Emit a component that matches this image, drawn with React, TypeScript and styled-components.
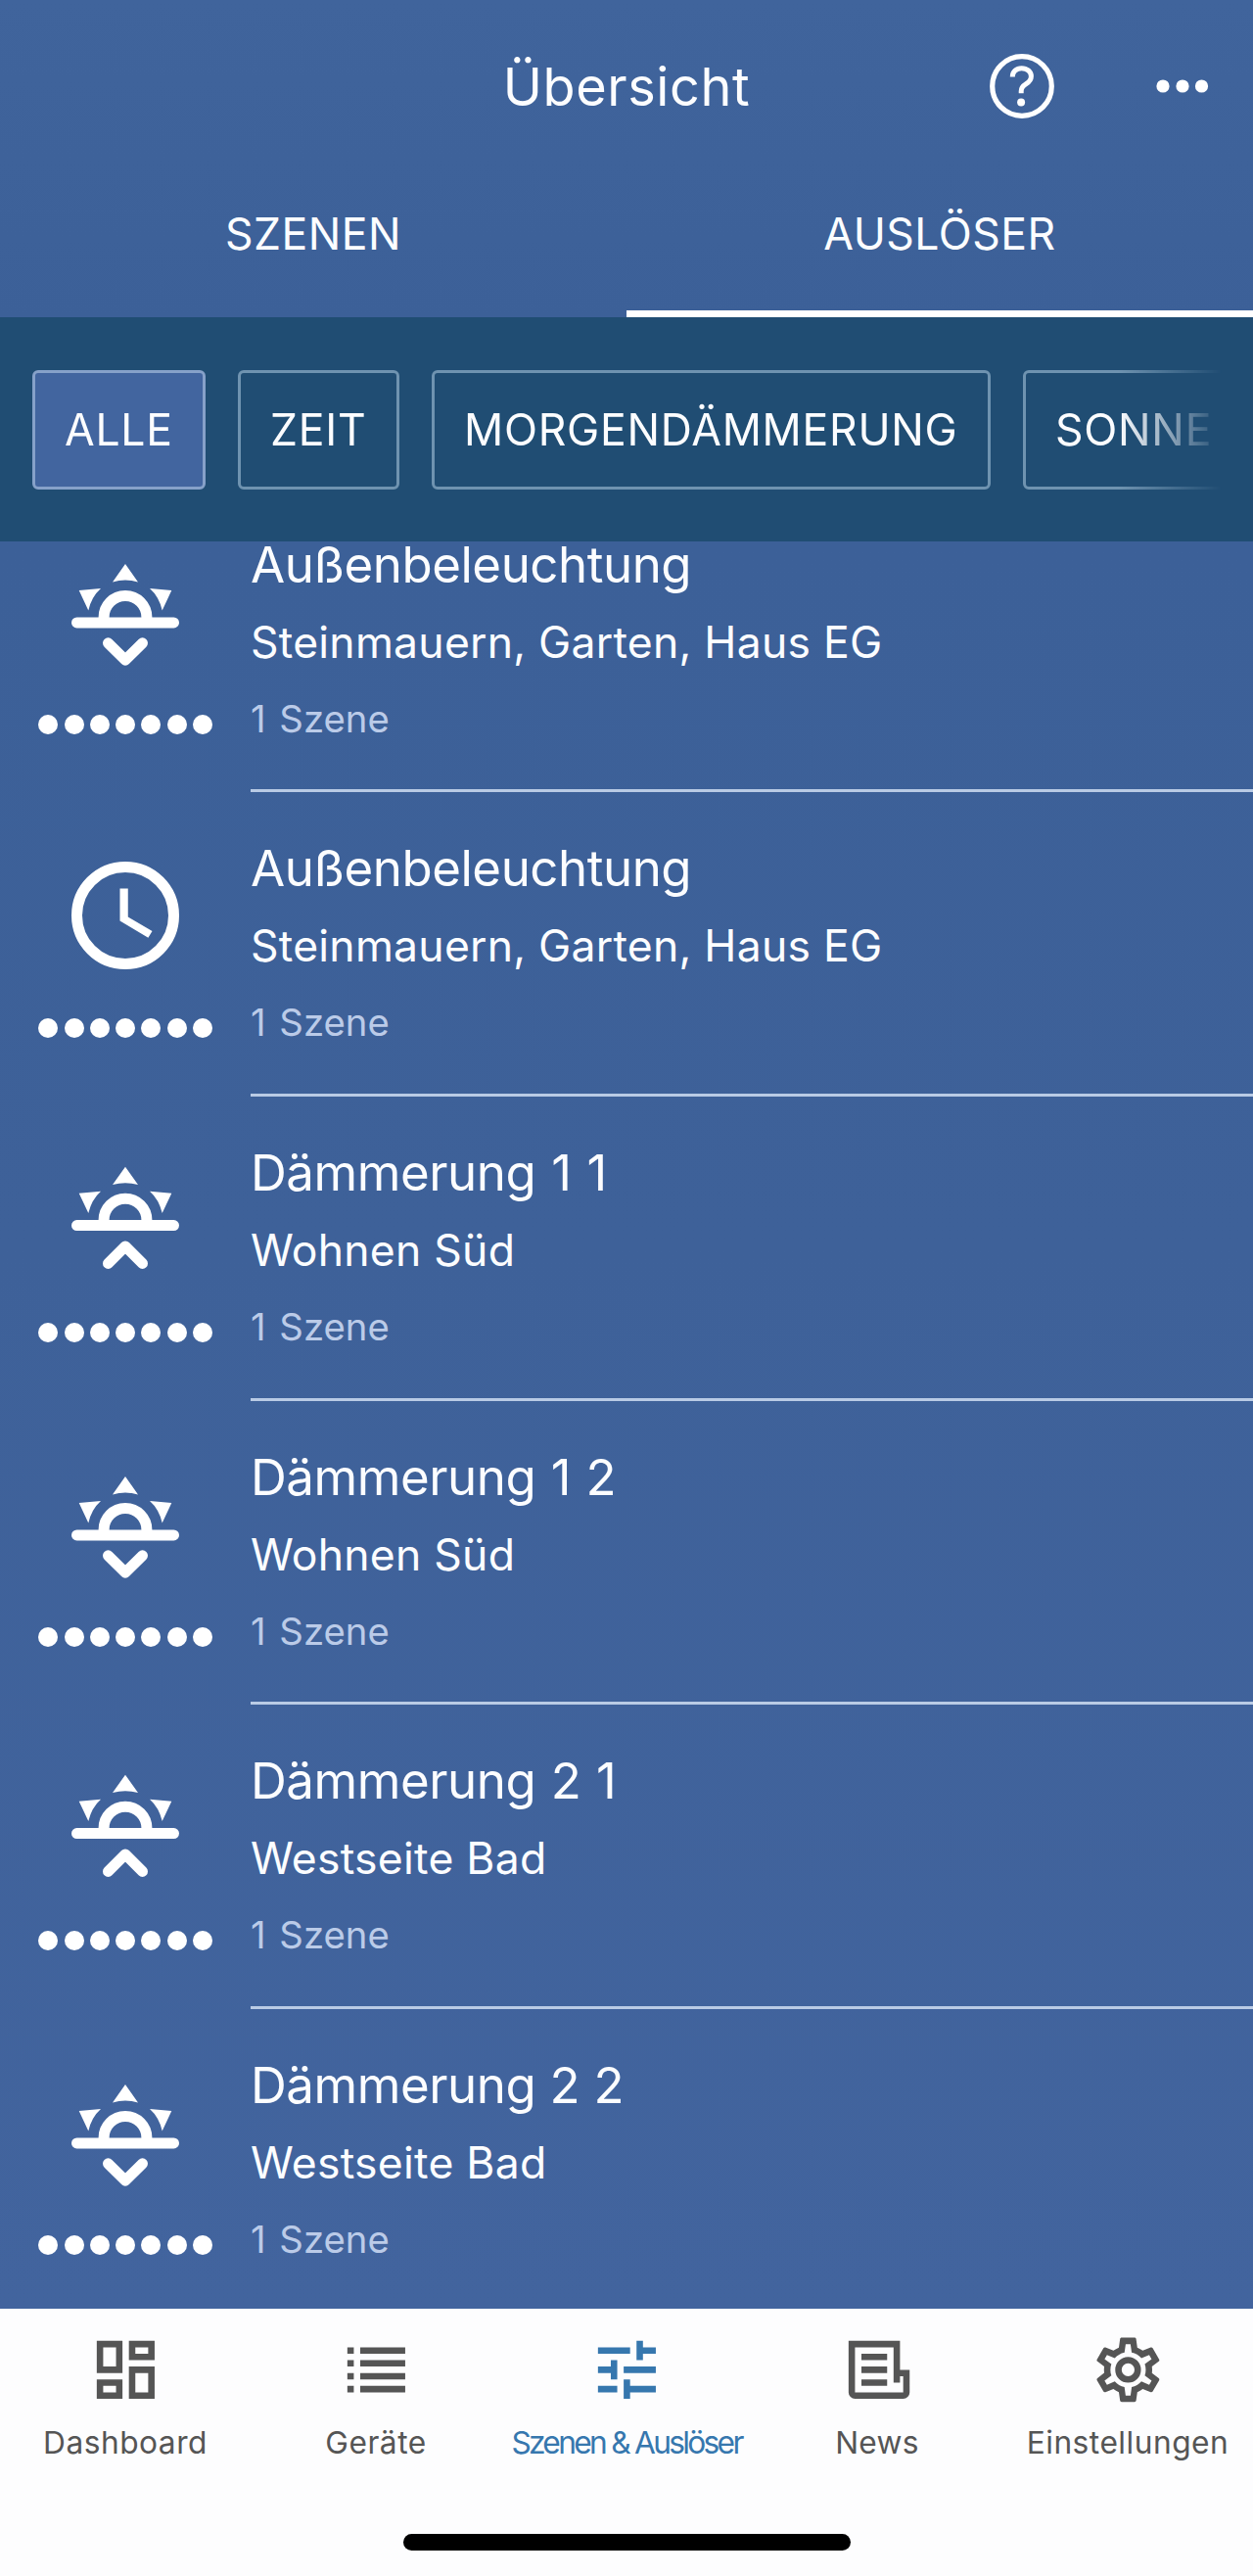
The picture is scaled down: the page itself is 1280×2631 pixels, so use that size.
import React from "react";
import styled, { createGlobalStyle } from "styled-components";

const GlobalStyle = createGlobalStyle`
  * { box-sizing: border-box; }
  body { margin: 0; background: #fdfdfe; }
  svg { display: block; }
`;

const Screen = styled.main`
  width: 1280px;
  height: 2631px;
  display: flex;
  flex-direction: column;
  overflow: hidden;
  background: #3e6199;
  color: #fcfdff;
  font-family: Inter, "Liberation Sans", sans-serif;
`;

const Header = styled.header`
  height: 324px;
  flex: none;
  display: flex;
  flex-direction: column;
  background: linear-gradient(#40649c, #3c6098);
`;

const TitleBar = styled.div`
  height: 175px;
  display: grid;
  grid-template-columns: 1fr 260px 1fr;
  align-items: center;
`;

const Title = styled.h1`
  grid-column: 2;
  margin: 3px 0 0;
  text-align: center;
  white-space: nowrap;
  font-size: 54px;
  line-height: 66px;
  font-weight: 400;
  letter-spacing: 0.6px;
`;

const Actions = styled.div`
  display: flex;
  align-items: center;
  justify-content: flex-end;
  gap: 104px;
  padding-right: 45px;
`;

const Tabs = styled.nav`
  flex: 1;
  display: grid;
  grid-template-columns: 1fr 1fr;
`;

const Tab = styled.div<{ $active?: boolean }>`
  display: flex;
  justify-content: center;
  padding-top: 37px;
  border-bottom: 7px solid ${(p) => (p.$active ? "#fff" : "transparent")};
  font-size: 44.5px;
  line-height: 54px;
  letter-spacing: 0.5px;
`;

const FilterBar = styled.div`
  height: 229px;
  flex: none;
  padding: 54px 32px 0 33px;
  background: #204d73;
`;

const ChipRow = styled.div`
  display: flex;
  gap: 33px;
  overflow: hidden;
  mask-image: linear-gradient(to right, #000 1110px, transparent 1215px);
`;

const Chip = styled.div<{ $width: number; $active?: boolean }>`
  width: ${(p) => p.$width}px;
  height: 122px;
  flex: none;
  display: flex;
  align-items: center;
  padding-left: 30px;
  border: 3.3px solid ${(p) => (p.$active ? "#86a1c9" : "#6f93b0")};
  border-radius: 6px;
  background: ${(p) => (p.$active ? "#42659f" : "transparent")};
  font-size: 44.5px;
  line-height: 54px;
  white-space: nowrap;
  letter-spacing: 0.75px;
`;

const List = styled.section`
  flex: 1;
  min-height: 0;
  overflow: hidden;
  background: linear-gradient(#3c6098, #3e6199 40%, #42649e);
`;

/* The list is scrolled, so its first row starts above the visible area. */
const ScrolledRows = styled.div`
  display: flex;
  flex-direction: column;
  margin-top: -54.2px;
`;

const Row = styled.article`
  height: 310.6px;
  flex: none;
  display: grid;
  grid-template-columns: 256px 1fr;
`;

const IconColumn = styled.div`
  display: flex;
  flex-direction: column;
  align-items: center;
  padding-top: 71px;
`;

const Days = styled.div`
  display: flex;
  gap: 6.25px;
  margin-top: 50px;
`;

const Day = styled.i`
  width: 20px;
  height: 20px;
  border-radius: 50%;
  background: #fff;
`;

const Details = styled.div<{ $divider: boolean }>`
  display: flex;
  flex-direction: column;
  padding-top: 45px;
  border-bottom: 3.3px solid ${(p) => (p.$divider ? "#b9cbe5" : "transparent")};
`;

const Name = styled.div<{ $wordSpacing: number }>`
  font-size: 51px;
  line-height: 66px;
  letter-spacing: -0.45px;
  word-spacing: ${(p) => p.$wordSpacing}px;
`;

const Place = styled.div`
  margin-top: 17px;
  font-size: 44.5px;
  line-height: 58px;
  letter-spacing: 0.24px;
`;

const Count = styled.div`
  margin-top: 24px;
  font-size: 38.3px;
  line-height: 50px;
  word-spacing: 3px;
  color: #bbcbe8;
`;

const Footer = styled.footer`
  height: 273px;
  flex: none;
  display: flex;
  flex-direction: column;
  align-items: center;
  background: #fdfdfe;
`;

const NavItems = styled.nav`
  width: 100%;
  height: 230px;
  display: grid;
  grid-template-columns: repeat(5, 1fr);
`;

const NavItem = styled.div<{ $active?: boolean; $spacing: number }>`
  display: flex;
  flex-direction: column;
  align-items: center;
  gap: 15px;
  padding-top: 23px;
  color: ${(p) => (p.$active ? "#3677ae" : "#555")};
  font-size: 31.7px;
  line-height: 40px;
  white-space: nowrap;
  letter-spacing: ${(p) => p.$spacing}px;
`;

const HomeIndicator = styled.div`
  width: 457px;
  height: 17px;
  border-radius: 9px;
  background: #000;
`;

type TriggerKind = "sunset" | "sunrise" | "clock";

function TriggerIcon({ kind }: { kind: TriggerKind }) {
  if (kind === "clock") {
    return (
      <svg width="110" height="110" viewBox="2 2 20 20" fill="#fff">
        <circle cx="12" cy="12" r="9" fill="none" stroke="#fff" strokeWidth="2" />
        <path d="M12.5 7H11v6l5.25 3.15.75-1.23-4.5-2.67z" />
      </svg>
    );
  }
  const rising = kind === "sunrise";
  return (
    <svg width="110" height="110" viewBox={rising ? "0 5.3 110 110" : "0 0 110 110"} fill="#fff">
      <path d="M55 6.1 68 24.4Q55 20.6 42 24.4Z" />
      <path d="M7.7 33.1 30 31.1Q20.6 39.5 17.3 53.4Z" />
      <path d="M102.3 33.1 80 31.1Q89.4 39.5 92.7 53.4Z" />
      <path d="M33.1 62V60.4a21.9 21.9 0 0 1 43.8 0V62" fill="none" stroke="#fff" strokeWidth="11" />
      <rect y="60.4" width="110" height="11" rx="5.5" />
      <path
        d={rising ? "M37.5 104.7 55 87.2l17.5 17.5" : "M37.5 86.8 55 104.2l17.5-17.4"}
        fill="none"
        stroke="#fff"
        strokeWidth="11"
        strokeLinecap="round"
        strokeLinejoin="round"
      />
    </svg>
  );
}

function HelpIcon() {
  return (
    <svg width="66" height="66" viewBox="0 0 66 66" fill="none" stroke="#fff">
      <circle cx="33" cy="33" r="30.3" strokeWidth="5.2" />
      <path
        d="M23.3 23.4c0-5 3.9-8.7 9.3-8.7 5.6 0 9.8 3.4 9.8 8.4 0 3.5-1.9 5.6-5.1 7.6-3.7 2.3-5.1 4.1-5.1 7.3v2.3"
        strokeWidth="5"
      />
      <circle cx="32.1" cy="49.5" r="4" fill="#fff" stroke="none" />
    </svg>
  );
}

function MoreIcon() {
  return (
    <svg width="54" height="14" viewBox="0 0 54 14" fill="#fff">
      <circle cx="7" cy="7" r="6.6" />
      <circle cx="27" cy="7" r="6.6" />
      <circle cx="46.5" cy="7" r="6.6" />
    </svg>
  );
}

const navPaths = {
  dashboard:
    "M19 5v2h-4V5h4M9 5v6H5V5h4m10 8v6h-4v-6h4M9 17v2H5v-2h4M21 3h-8v6h8V3zM11 3H3v10h8V3zm10 8h-8v10h8V11zm-10 4H3v6h8v-6z",
  list: "M3 5h2v2H3zM7 5h14v2H7zM3 9h2v2H3zM7 9h14v2H7zM3 13h2v2H3zM7 13h14v2H7zM3 17h2v2H3zM7 17h14v2H7z",
  tune: "M3 17v2h6v-2H3zM3 5v2h10V5H3zm10 16v-2h8v-2h-8v-2h-2v6h2zM7 9v2H3v2h4v2h2V9H7zm14 4v-2H11v2h10zm-6-4h2V7h4V5h-4V3h-2v6z",
  news: "M3 3h16v9h3v7a2 2 0 0 1-2 2H5a2 2 0 0 1-2-2zM5 5v14h15v-5h-1v2h-2V5zM7 7h8v2H7zM7 11h8v2H7zM7 15h8v2H7z",
  settings:
    "M12,8A4,4 0 0,1 16,12A4,4 0 0,1 12,16A4,4 0 0,1 8,12A4,4 0 0,1 12,8M12,10A2,2 0 0,0 10,12A2,2 0 0,0 12,14A2,2 0 0,0 14,12A2,2 0 0,0 12,10M10,22C9.75,22 9.54,21.82 9.5,21.58L9.13,18.93C8.5,18.68 7.96,18.34 7.44,17.94L4.95,18.95C4.73,19.03 4.46,18.95 4.34,18.73L2.34,15.27C2.21,15.05 2.27,14.78 2.46,14.63L4.57,12.97L4.5,12L4.57,11L2.46,9.37C2.27,9.22 2.21,8.95 2.34,8.73L4.34,5.27C4.46,5.05 4.73,4.96 4.95,5.05L7.44,6.05C7.96,5.66 8.5,5.32 9.13,5.07L9.5,2.42C9.54,2.18 9.75,2 10,2H14C14.25,2 14.46,2.18 14.5,2.42L14.87,5.07C15.5,5.32 16.04,5.66 16.56,6.05L19.05,5.05C19.27,4.96 19.54,5.05 19.66,5.27L21.66,8.73C21.79,8.95 21.73,9.22 21.54,9.37L19.43,11L19.5,12L19.43,13L21.54,14.63C21.73,14.78 21.79,15.05 21.66,15.27L19.66,18.73C19.54,18.95 19.27,19.04 19.05,18.95L16.56,17.95C16.04,18.34 15.5,18.68 14.87,18.93L14.5,21.58C14.46,21.82 14.25,22 14,22H10M11.25,4L10.88,6.61C9.68,6.86 8.62,7.5 7.85,8.39L5.44,7.35L4.69,8.65L6.8,10.2C6.4,11.37 6.4,12.64 6.8,13.8L4.68,15.36L5.43,16.66L7.86,15.62C8.63,16.5 9.68,17.14 10.87,17.38L11.24,20H12.76L13.13,17.39C14.32,17.14 15.37,16.5 16.14,15.62L18.57,16.66L19.32,15.36L17.2,13.81C17.6,12.64 17.6,11.37 17.2,10.2L19.31,8.65L18.56,7.35L16.15,8.39C15.38,7.5 14.32,6.86 13.12,6.62L12.75,4H11.25Z",
};

const chips = [
  { label: "ALLE", width: 177, active: true },
  { label: "ZEIT", width: 165 },
  { label: "MORGENDÄMMERUNG", width: 571 },
  { label: "SONNE", width: 300 },
];

const triggers: { kind: TriggerKind; name: string; place: string; wordSpacing: number }[] = [
  { kind: "sunset", name: "Außenbeleuchtung", place: "Steinmauern, Garten, Haus EG", wordSpacing: 0 },
  { kind: "clock", name: "Außenbeleuchtung", place: "Steinmauern, Garten, Haus EG", wordSpacing: 0 },
  { kind: "sunrise", name: "Dämmerung 1 1", place: "Wohnen Süd", wordSpacing: 2.1 },
  { kind: "sunset", name: "Dämmerung 1 2", place: "Wohnen Süd", wordSpacing: 1.6 },
  { kind: "sunrise", name: "Dämmerung 2 1", place: "Westseite Bad", wordSpacing: 1.6 },
  { kind: "sunset", name: "Dämmerung 2 2", place: "Westseite Bad", wordSpacing: 0.4 },
];

const navItems: { label: string; icon: keyof typeof navPaths; spacing: number; active?: boolean }[] = [
  { label: "Dashboard", icon: "dashboard", spacing: 0.5 },
  { label: "Geräte", icon: "list", spacing: 0.5 },
  { label: "Szenen & Auslöser", icon: "tune", spacing: -2.7, active: true },
  { label: "News", icon: "news", spacing: 0.3 },
  { label: "Einstellungen", icon: "settings", spacing: 0.5 },
];

export default function App() {
  return (
    <Screen>
      <GlobalStyle />
      <Header>
        <TitleBar>
          <Title>Übersicht</Title>
          <Actions>
            <HelpIcon />
            <MoreIcon />
          </Actions>
        </TitleBar>
        <Tabs>
          <Tab>SZENEN</Tab>
          <Tab $active>AUSLÖSER</Tab>
        </Tabs>
      </Header>
      <FilterBar>
        <ChipRow>
          {chips.map((c) => (
            <Chip key={c.label} $width={c.width} $active={c.active}>
              {c.label}
            </Chip>
          ))}
        </ChipRow>
      </FilterBar>
      <List>
        <ScrolledRows>
          {triggers.map((t, i) => (
            <Row key={i}>
              <IconColumn>
                <TriggerIcon kind={t.kind} />
                <Days>
                  {Array.from({ length: 7 }, (_, d) => (
                    <Day key={d} />
                  ))}
                </Days>
              </IconColumn>
              <Details $divider={i < triggers.length - 1}>
                <Name $wordSpacing={t.wordSpacing}>{t.name}</Name>
                <Place>{t.place}</Place>
                <Count>1 Szene</Count>
              </Details>
            </Row>
          ))}
        </ScrolledRows>
      </List>
      <Footer>
        <NavItems>
          {navItems.map((n) => (
            <NavItem key={n.label} $active={n.active} $spacing={n.spacing}>
              <svg width="78.8" height="78.8" viewBox="0 0 24 24" fill="currentColor" fillRule="evenodd">
                <path d={navPaths[n.icon]} />
              </svg>
              <span>{n.label}</span>
            </NavItem>
          ))}
        </NavItems>
        <HomeIndicator />
      </Footer>
    </Screen>
  );
}
